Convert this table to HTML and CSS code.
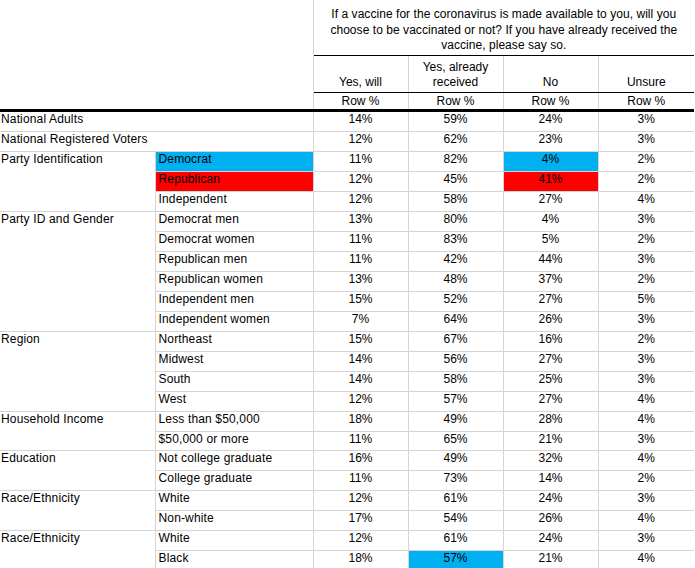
FILE: index.html
```html
<!DOCTYPE html>
<html lang="en">
<head>
<meta charset="utf-8">
<title>Vaccine crosstab</title>
<link rel="stylesheet" href="styles.css">
</head>
<body>
<table class="xt">
  <colgroup>
    <col class="c-lab">
    <col class="c-sub">
    <col class="c-num">
    <col class="c-num">
    <col class="c-num">
    <col class="c-last">
  </colgroup>
  <tr class="r-q">
    <td class="corner" rowspan="3" colspan="2"></td>
    <td class="q last" colspan="4">If a vaccine for the coronavirus is made available to you, will you<br>choose to be vaccinated or not? If you have already received the<br>vaccine, please say so.</td>
  </tr>
  <tr class="r-ch">
    <td class="ch">Yes, will</td>
    <td class="ch">Yes, already<br>received</td>
    <td class="ch">No</td>
    <td class="ch last">Unsure</td>
  </tr>
  <tr class="r-rp">
    <td class="rp">Row %</td>
    <td class="rp">Row %</td>
    <td class="rp">Row %</td>
    <td class="rp last">Row %</td>
  </tr>
  <tr>
    <td class="lab" colspan="2">National Adults</td>
    <td class="num">14%</td><td class="num">59%</td><td class="num">24%</td><td class="num last">3%</td>
  </tr>
  <tr>
    <td class="lab" colspan="2">National Registered Voters</td>
    <td class="num">12%</td><td class="num">62%</td><td class="num">23%</td><td class="num last">3%</td>
  </tr>
  <tr>
    <td class="lab" rowspan="3">Party Identification</td>
    <td class="sub blue">Democrat</td>
    <td class="num">11%</td><td class="num">82%</td><td class="num blue">4%</td><td class="num last">2%</td>
  </tr>
  <tr>
    <td class="sub red">Republican</td>
    <td class="num">12%</td><td class="num">45%</td><td class="num red">41%</td><td class="num last">2%</td>
  </tr>
  <tr>
    <td class="sub">Independent</td>
    <td class="num">12%</td><td class="num">58%</td><td class="num">27%</td><td class="num last">4%</td>
  </tr>
  <tr>
    <td class="lab" rowspan="6">Party ID and Gender</td>
    <td class="sub">Democrat men</td>
    <td class="num">13%</td><td class="num">80%</td><td class="num">4%</td><td class="num last">3%</td>
  </tr>
  <tr>
    <td class="sub">Democrat women</td>
    <td class="num">11%</td><td class="num">83%</td><td class="num">5%</td><td class="num last">2%</td>
  </tr>
  <tr>
    <td class="sub">Republican men</td>
    <td class="num">11%</td><td class="num">42%</td><td class="num">44%</td><td class="num last">3%</td>
  </tr>
  <tr>
    <td class="sub">Republican women</td>
    <td class="num">13%</td><td class="num">48%</td><td class="num">37%</td><td class="num last">2%</td>
  </tr>
  <tr>
    <td class="sub">Independent men</td>
    <td class="num">15%</td><td class="num">52%</td><td class="num">27%</td><td class="num last">5%</td>
  </tr>
  <tr>
    <td class="sub">Independent women</td>
    <td class="num">7%</td><td class="num">64%</td><td class="num">26%</td><td class="num last">3%</td>
  </tr>
  <tr>
    <td class="lab" rowspan="4">Region</td>
    <td class="sub">Northeast</td>
    <td class="num">15%</td><td class="num">67%</td><td class="num">16%</td><td class="num last">2%</td>
  </tr>
  <tr>
    <td class="sub">Midwest</td>
    <td class="num">14%</td><td class="num">56%</td><td class="num">27%</td><td class="num last">3%</td>
  </tr>
  <tr>
    <td class="sub">South</td>
    <td class="num">14%</td><td class="num">58%</td><td class="num">25%</td><td class="num last">3%</td>
  </tr>
  <tr>
    <td class="sub">West</td>
    <td class="num">12%</td><td class="num">57%</td><td class="num">27%</td><td class="num last">4%</td>
  </tr>
  <tr>
    <td class="lab" rowspan="2">Household Income</td>
    <td class="sub">Less than $50,000</td>
    <td class="num">18%</td><td class="num">49%</td><td class="num">28%</td><td class="num last">4%</td>
  </tr>
  <tr class="short">
    <td class="sub">$50,000 or more</td>
    <td class="num">11%</td><td class="num">65%</td><td class="num">21%</td><td class="num last">3%</td>
  </tr>
  <tr>
    <td class="lab" rowspan="2">Education</td>
    <td class="sub">Not college graduate</td>
    <td class="num">16%</td><td class="num">49%</td><td class="num">32%</td><td class="num last">4%</td>
  </tr>
  <tr>
    <td class="sub">College graduate</td>
    <td class="num">11%</td><td class="num">73%</td><td class="num">14%</td><td class="num last">2%</td>
  </tr>
  <tr>
    <td class="lab" rowspan="2">Race/Ethnicity</td>
    <td class="sub">White</td>
    <td class="num">12%</td><td class="num">61%</td><td class="num">24%</td><td class="num last">3%</td>
  </tr>
  <tr>
    <td class="sub">Non-white</td>
    <td class="num">17%</td><td class="num">54%</td><td class="num">26%</td><td class="num last">4%</td>
  </tr>
  <tr>
    <td class="lab" rowspan="2">Race/Ethnicity</td>
    <td class="sub">White</td>
    <td class="num">12%</td><td class="num">61%</td><td class="num">24%</td><td class="num last">3%</td>
  </tr>
  <tr>
    <td class="sub">Black</td>
    <td class="num">18%</td><td class="num blue">57%</td><td class="num">21%</td><td class="num last">4%</td>
  </tr>
</table>
</body>
</html>
```

FILE: styles.css
```css
html, body {
  margin: 0;
  padding: 0;
  background: #ffffff;
}

body {
  font-family: "Liberation Sans", Arial, sans-serif;
  font-size: 12px;
  color: #000000;
}

.xt {
  border-collapse: collapse;
  table-layout: fixed;
  width: 694px;
}

.c-lab { width: 155px; }
.c-sub { width: 158px; }
.c-num { width: 95px; }
.c-last { width: 96px; }

.xt td {
  padding: 0;
  border: 1px solid #d4d4d4;
  vertical-align: top;
  line-height: 15px;
  height: 19px;
  white-space: nowrap;
  overflow: hidden;
}

.xt td.last {
  border-right: none;
}

.xt td.corner {
  border-top: none;
  border-left: none;
  border-bottom: 3px solid #000000;
  height: auto;
}

.xt td.q {
  border-top: none;
  border-bottom: 1px solid #000000;
  text-align: center;
  vertical-align: bottom;
  white-space: normal;
  line-height: 15.6px;
  height: 54px;
  padding-bottom: 1px;
  letter-spacing: 0.05px;
}

.xt td.ch {
  border-bottom: 1px solid #000000;
  text-align: center;
  vertical-align: bottom;
  line-height: 15.6px;
  height: 35px;
  padding-bottom: 1px;
}

.xt td.rp {
  border-bottom: 3px solid #000000;
  text-align: center;
  vertical-align: top;
  line-height: 15px;
  height: 15px;
  padding-top: 1px;
}

.xt td.lab {
  border-left: none;
  padding-left: 1px;
  letter-spacing: 0.15px;
}

.xt td.sub {
  padding-left: 3px;
  letter-spacing: 0.15px;
}

.xt td.num {
  text-align: center;
}

.xt tr.short td {
  height: 18px;
}

.xt td.blue {
  background: #00b0f0;
}

.xt td.red {
  background: #ff0000;
}
```
